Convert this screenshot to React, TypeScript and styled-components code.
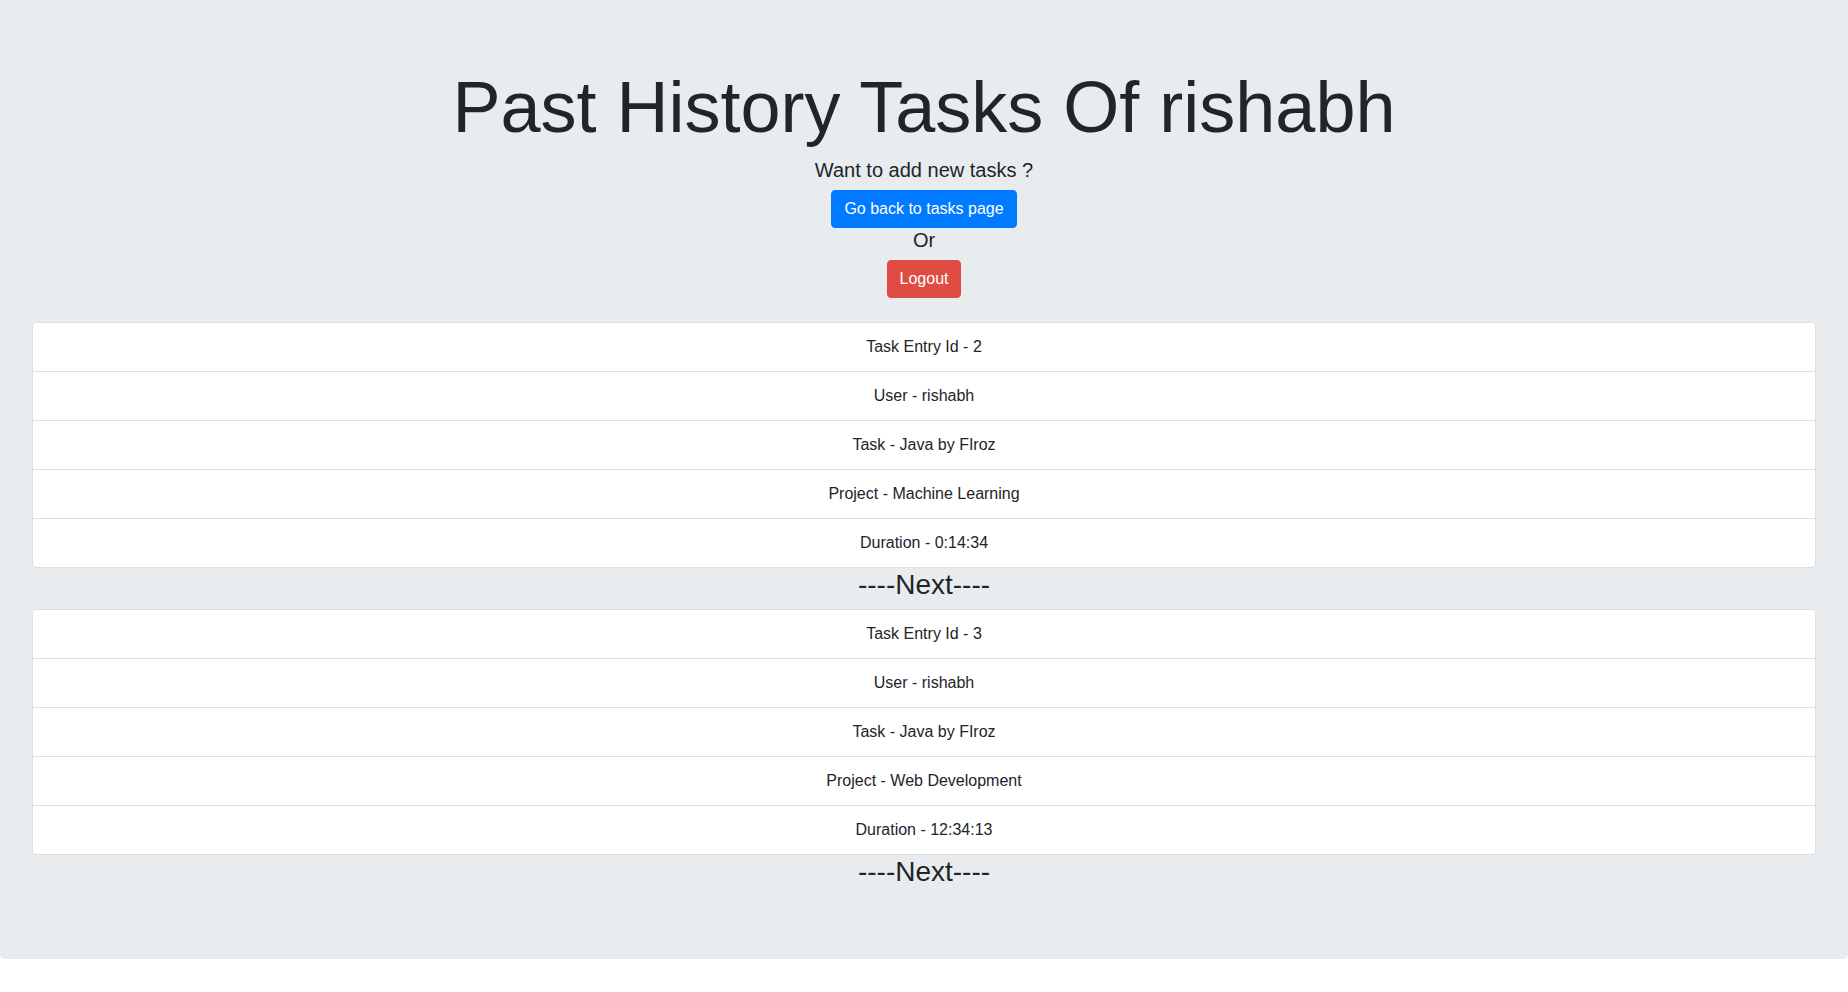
import styled, { createGlobalStyle } from "styled-components";

const GlobalStyle = createGlobalStyle`
  * { box-sizing: border-box; }
  body {
    margin: 0;
    font-family: "Liberation Sans", Arial, sans-serif;
    font-size: 16px;
    line-height: 1.5;
    color: #212529;
    background-color: #fff;
  }
`;

interface ITaskEntry {
  id: number;
  user: string;
  task: string;
  project: string;
  duration: string;
}

const entries: ITaskEntry[] = [
  { id: 2, user: "rishabh", task: "Java by FIroz", project: "Machine Learning", duration: "0:14:34" },
  { id: 3, user: "rishabh", task: "Java by FIroz", project: "Web Development", duration: "12:34:13" },
];

const Jumbotron = styled.div`
  background-color: #e9ecef;
  padding: 64px 32px 63px;
  margin-bottom: 32px;
  border-radius: 0 0 4.8px 4.8px;
  text-align: center;
`;

const Title = styled.h1`
  font-size: 72px;
  font-weight: 400;
  line-height: 1.2;
  margin: 0 0 8px;
`;

const Lead = styled.h5`
  font-size: 20px;
  font-weight: 400;
  line-height: 1.2;
  margin: 0 0 8px;
`;

const Button = styled.button<{ $variant: "primary" | "danger" }>`
  display: inline-block;
  font-family: inherit;
  font-size: 16px;
  line-height: 1.5;
  padding: 6px 12px;
  border-radius: 4px;
  border: 1px solid ${(p) => (p.$variant === "primary" ? "#007bff" : "#e04b44")};
  background-color: ${(p) => (p.$variant === "primary" ? "#007bff" : "#e04b44")};
  color: #fff;
  cursor: pointer;
  vertical-align: middle;
`;

const ButtonRow = styled.div`
  line-height: 0;
`;

const List = styled.ul<{ $first?: boolean }>`
  list-style: none;
  padding: 0;
  margin: ${(p) => (p.$first ? "24px" : "0")} 0 0;
  border-radius: 4px;
  background-color: #fff;
`;

const Item = styled.li`
  padding: 12px 20px;
  border: 1px solid #dfdfdf;
  & + & {
    border-top-width: 0;
  }
  &:first-child {
    border-top-left-radius: 4px;
    border-top-right-radius: 4px;
  }
  &:last-child {
    border-bottom-left-radius: 4px;
    border-bottom-right-radius: 4px;
  }
`;

const Next = styled.h3`
  font-size: 28px;
  font-weight: 400;
  line-height: 1.2;
  margin: 0 0 7px;
`;

function App() {
  return (
    <>
      <GlobalStyle />
      <Jumbotron>
        <Title>Past History Tasks Of rishabh</Title>
        <Lead>Want to add new tasks ?</Lead>
        <ButtonRow>
          <Button $variant="primary">Go back to tasks page</Button>
        </ButtonRow>
        <Lead>Or</Lead>
        <ButtonRow>
          <Button $variant="danger">Logout</Button>
        </ButtonRow>
        {entries.map((entry, i) => (
          <div key={entry.id}>
            <List $first={i === 0}>
              <Item>Task Entry Id - {entry.id}</Item>
              <Item>User - {entry.user}</Item>
              <Item>Task - {entry.task}</Item>
              <Item>Project - {entry.project}</Item>
              <Item>Duration - {entry.duration}</Item>
            </List>
            <Next>----Next----</Next>
          </div>
        ))}
      </Jumbotron>
    </>
  );
}

export default App;
